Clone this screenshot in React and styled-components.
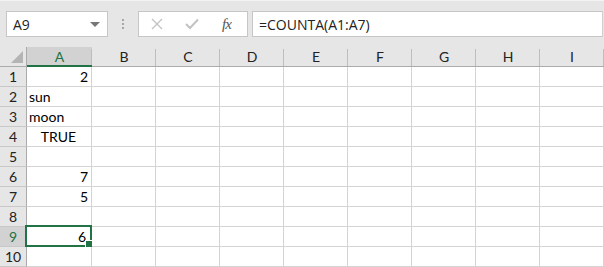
import React from 'react';
import styled, { createGlobalStyle } from 'styled-components';

const GlobalStyle = createGlobalStyle`
  html, body {
    margin: 0;
    padding: 0;
    background: #e6e6e6;
  }
  * { box-sizing: border-box; }
`;

const Page = styled.div`
  width: 604px;
  height: 267px;
  overflow: hidden;
  background: #e6e6e6;
  border-top: 1px solid #f3f3f3;
  font-family: Lato, "Liberation Sans", sans-serif;
`;

const Toolbar = styled.div`
  display: flex;
  align-items: center;
  height: 46px;
  padding: 10px 0 10px 6px;
`;

const NameBox = styled.div`
  width: 102px;
  height: 26px;
  background: #fff;
  border: 1px solid #c6c6c6;
  display: flex;
  align-items: center;
  justify-content: space-between;
  padding: 0 7px 0 6px;
  font-family: "Open Sans", "Liberation Sans", sans-serif;
  font-size: 14px;
  color: #222;
`;

const Caret = styled.span`
  width: 0;
  height: 0;
  border-left: 5px solid transparent;
  border-right: 5px solid transparent;
  border-top: 5px solid #777;
`;

const Grip = styled.div`
  width: 30px;
  display: flex;
  flex-direction: column;
  align-items: center;
  gap: 2px;
  span {
    width: 2px;
    height: 2px;
    background: #a6a6a6;
  }
`;

const FxBox = styled.div`
  width: 110px;
  height: 26px;
  background: #fff;
  border: 1px solid #c6c6c6;
  display: flex;
  align-items: center;
  padding-left: 12px;
  gap: 22px;
`;

const Fx = styled.span`
  font-family: "Liberation Serif", serif;
  font-style: italic;
  font-size: 15px;
  color: #555;
  letter-spacing: -1px;
  margin-left: 1px;
`;

const FormulaInput = styled.div`
  flex: 1;
  margin-left: 4px;
  height: 26px;
  background: #fff;
  border: 1px solid #c6c6c6;
  border-right-color: #d0d0d0;
  margin-right: 1px;
  display: flex;
  align-items: center;
  padding-left: 6px;
  font-family: "Open Sans", "Liberation Sans", sans-serif;
  font-size: 14px;
  color: #222;
`;

const Sheet = styled.div`
  display: grid;
  grid-template-columns: 27px 65px repeat(8, 64px);
  grid-auto-rows: 20px;
  font-size: 14px;
`;

const Corner = styled.div`
  position: relative;
  background: #e6e6e6;
  border-right: 1px solid #ababab;
  border-bottom: 1px solid #ababab;
  &::after {
    content: '';
    position: absolute;
    right: 3px;
    bottom: 3px;
    width: 0;
    height: 0;
    border-left: 12px solid transparent;
    border-bottom: 12px solid #b4b4b4;
  }
`;

const ColHead = styled.div`
  position: relative;
  display: flex;
  align-items: center;
  justify-content: center;
  background: ${p => (p.$active ? '#d2d2d2' : '#e6e6e6')};
  color: ${p => (p.$active ? '#217346' : '#222')};
  border-bottom: ${p => (p.$active ? '2px solid #217346' : '1px solid #ababab')};
  padding-top: ${p => (p.$active ? '1px' : '0')};
  &::after {
    content: '';
    position: absolute;
    right: 0;
    top: 2px;
    bottom: 0;
    width: 1px;
    background: #bdbdbd;
  }
`;

const RowHead = styled.div`
  display: flex;
  align-items: center;
  justify-content: center;
  background: ${p => (p.$active ? '#d2d2d2' : '#e6e6e6')};
  color: ${p => (p.$active ? '#217346' : '#222')};
  border-right: 1px solid #ababab;
  border-bottom: 1px solid #c8c8c8;
`;

const Cell = styled.div`
  position: relative;
  display: flex;
  align-items: center;
  justify-content: ${p => p.$align};
  padding: 0 ${p => (p.$selected ? '5px' : '3px')} 0 2px;
  background: #fff;
  color: #000;
  border-right: 1px solid #d4d4d4;
  border-bottom: 1px solid #d4d4d4;
  white-space: nowrap;
`;

const Selection = styled.div`
  position: absolute;
  left: -2px;
  top: -2px;
  right: -1px;
  bottom: -1px;
  border: 2px solid #217346;
  pointer-events: none;
  &::after {
    content: '';
    position: absolute;
    right: -4px;
    bottom: -4px;
    width: 7px;
    height: 7px;
    background: #217346;
    border: 1px solid #fff;
  }
`;

const CloseIcon = () => (
  <svg width="12" height="12" viewBox="0 0 12 12">
    <path d="M1 1 L11 11 M11 1 L1 11" stroke="#c3c3c3" strokeWidth="1.4" fill="none" />
  </svg>
);

const CheckIcon = () => (
  <svg width="14" height="12" viewBox="0 0 14 12">
    <path d="M1 6 L5 10 L13 1.5" stroke="#c3c3c3" strokeWidth="2" fill="none" />
  </svg>
);

const columns = ['A', 'B', 'C', 'D', 'E', 'F', 'G', 'H', 'I'];

const data = {
  1: { value: '2', align: 'flex-end' },
  2: { value: 'sun', align: 'flex-start' },
  3: { value: 'moon', align: 'flex-start' },
  4: { value: 'TRUE', align: 'center' },
  6: { value: '7', align: 'flex-end' },
  7: { value: '5', align: 'flex-end' },
  9: { value: '6', align: 'flex-end' },
};

const activeRow = 9;

export default function App() {
  const rows = Array.from({ length: 10 }, (_, i) => i + 1);
  return (
    <>
      <GlobalStyle />
      <Page>
        <Toolbar>
          <NameBox>
            <span>A9</span>
            <Caret />
          </NameBox>
          <Grip>
            <span />
            <span />
            <span />
          </Grip>
          <FxBox>
            <CloseIcon />
            <CheckIcon />
            <Fx>fx</Fx>
          </FxBox>
          <FormulaInput>=COUNTA(A1:A7)</FormulaInput>
        </Toolbar>
        <Sheet>
          <Corner />
          {columns.map(c => (
            <ColHead key={c} $active={c === 'A'}>{c}</ColHead>
          ))}
          {rows.map(r => (
            <React.Fragment key={r}>
              <RowHead $active={r === activeRow}>{r}</RowHead>
              {columns.map(c => {
                const d = c === 'A' ? data[r] : null;
                const selected = c === 'A' && r === activeRow;
                return (
                  <Cell key={c} $align={d ? d.align : 'flex-start'} $selected={selected}>
                    {d ? d.value : ''}
                    {selected && <Selection />}
                  </Cell>
                );
              })}
            </React.Fragment>
          ))}
        </Sheet>
      </Page>
    </>
  );
}
